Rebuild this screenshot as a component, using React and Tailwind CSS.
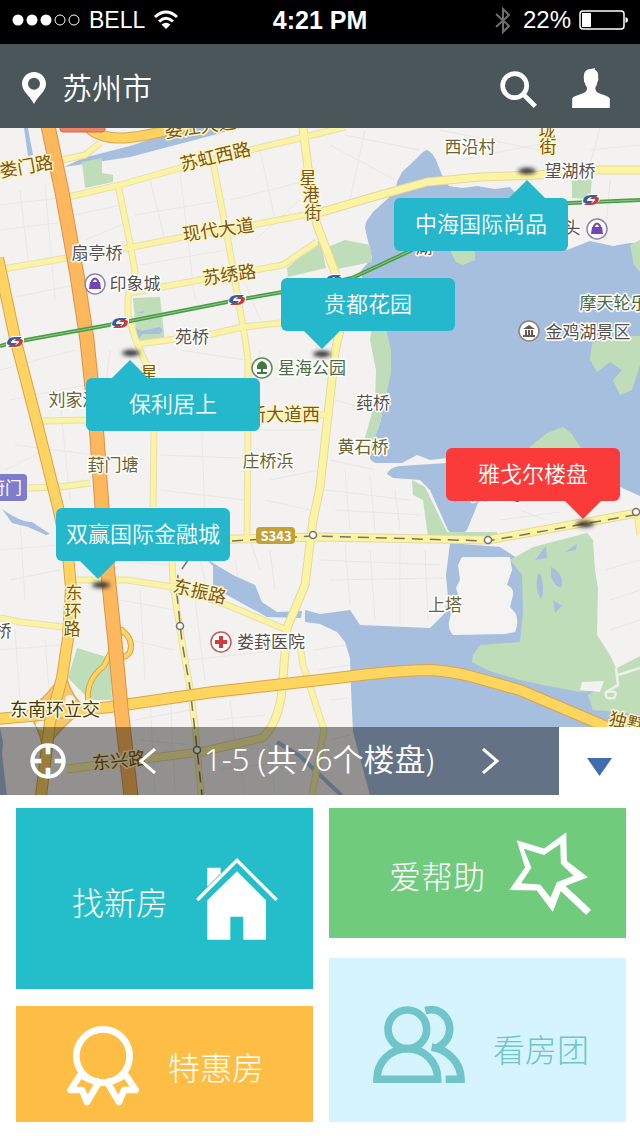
import React, { useState } from "react";

const MAP_WIDTH = 640;
const MAP_HEIGHT = 667;

// x / y are the top left corner of the bubble on the map, tail is the offset of its tip
const estates = [
  { name: "中海国际尚品", x: 394, y: 70, tail: 133, up: true },
  { name: "贵都花园", x: 281, y: 150, tail: 41, up: false },
  { name: "保利居上", x: 86, y: 250, tail: 44, up: true },
  { name: "雅戈尔楼盘", x: 446, y: 320, tail: 137, up: false, active: true },
  { name: "双赢国际金融城", x: 56, y: 380, tail: 42, up: false },
];

const lightRoads = [
  "M68 197L120 185L180 168L250 150L300 138L345 127",
  "M118 185L131 248L135 272L128 298L128 315L135 338L143 357L153 377L154 433L153 507",
  "M213 162L227 235L238 298L245 338L248 360L248 430L247 540",
  "M120 249L133 247L183 237L253 225L320 212",
  "M3 269L67 258",
  "M130 293L200 280L283 265L317 242",
  "M138 344L207 335L243 327L300 321",
  "M43 421L88 420",
  "M28 488L60 487L90 483",
  "M77 580L127 580L173 587L227 605L287 630",
  "M0 618L20 622L63 627",
  "M230 415L326 415",
  "M62 160L85 155L100 143",
  "M300 645L303 665L317 708L324 730L312 795",
  "M172 555L173 585L182 642L190 688L195 725L201 795",
  "M637 512L640 535",
];

const wideRoads = [
  "M303 128L308 168L317 225L335 272L341 325L335 352L320 487L313 520L308 560L305 585L287 628L282 690C280 712 272 730 262 738L200 752L67 769",
  "M315 214L373 197L427 182L480 177L540 175L567 170L640 170",
  "M200 540L320 537L488 540L637 513",
];

const faintStreets =
  "M0 205L60 198M0 230L65 222M0 300L75 285M20 190L28 260M45 185L55 300M75 215L120 205M85 240L128 222M150 180L165 240M180 172L195 300M135 215L225 200M230 200L310 180M260 150L275 220M240 270L260 320M140 265L225 250M255 240L300 200M330 145L395 180M345 135L420 150M365 130L350 200M440 130L540 150M460 160L560 140M600 128L590 165M610 180L605 240M640 145L590 150M0 370L75 350M10 400L85 385M15 445L95 455M5 470L45 450M60 400L70 500M110 350L100 430M160 455L240 458M200 380L205 520M180 350L245 360M260 350L255 400M160 490L245 500M270 480L320 470M255 430L315 430M265 500L310 510M335 400L370 410M330 460L375 470M325 490L410 500M345 470L350 530M370 475L375 530M395 490L400 530M335 510L420 515M0 550L60 545M10 580L60 570M20 520L25 600M0 650L60 645M15 630L20 700M45 640L50 700M110 560L170 565M120 600L175 610M130 640L175 650M140 590L145 680M195 600L205 680M190 660L280 650M200 560L210 600M235 560L240 590M250 540L260 570M270 550L275 590M320 560L440 565M330 580L445 578M345 545L350 605M370 550L375 620M400 545L400 625M425 550L428 620M315 650L345 645M318 670L348 665M135 720L190 710M140 740L190 745M150 700L155 790M170 690L175 790M210 700L275 690M215 720L265 715M230 700L235 745M220 770L300 760M240 755L245 795M270 745L275 795M330 700L348 698M330 740L350 735M520 510L545 520M500 520L560 512M605 570L640 560M610 600L640 590M610 630L640 620";

const metroLine =
  "M0 346L15 342L120 323L237 300L300 289L352 278L410 251L480 212L570 203L640 200";

const loopRamp = "M88 700Q86 680 104 666L122 630Q134 640 130 652Q124 662 112 650";

const labels = [
  { text: "娄门路", x: 26, y: 165, rotate: -10, size: 18, tone: "road" },
  { text: "娄江大道", x: 200, y: 125, rotate: -8, size: 18, tone: "road" },
  { text: "苏虹西路", x: 215, y: 155, rotate: -13, size: 18, tone: "road" },
  { text: "星", x: 308, y: 176, size: 17, tone: "road" },
  { text: "港", x: 311, y: 193, size: 17, tone: "road" },
  { text: "街", x: 313, y: 211, size: 17, tone: "road" },
  { text: "现代大道", x: 218, y: 228, rotate: -8, size: 18, tone: "road" },
  { text: "苏绣路", x: 229, y: 273, rotate: -8, size: 18, tone: "road" },
  { text: "扇亭桥", x: 97, y: 251, size: 17, tone: "place" },
  { text: "印象城", x: 135, y: 282, size: 17, tone: "place" },
  { text: "苑桥", x: 192, y: 335, size: 17, tone: "place" },
  { text: "西沿村", x: 470, y: 145, size: 17, tone: "village" },
  { text: "垅", x: 547, y: 129, size: 17, tone: "road" },
  { text: "街", x: 548, y: 145, size: 17, tone: "road" },
  { text: "望湖桥", x: 570, y: 169, size: 17, tone: "place" },
  { text: "头", x: 572, y: 226, size: 17, tone: "place" },
  { text: "湖", x: 424, y: 245, size: 17, tone: "place" },
  { text: "摩天轮乐园", x: 622, y: 301, size: 17, tone: "park" },
  { text: "金鸡湖景区", x: 588, y: 330, size: 17, tone: "place" },
  { text: "星", x: 149, y: 371, size: 17, tone: "road" },
  { text: "刘家浜", x: 74, y: 398, size: 17, tone: "village" },
  { text: "星海公园", x: 312, y: 366, size: 17, tone: "park" },
  { text: "新大道西", x: 284, y: 413, size: 18, tone: "road" },
  { text: "莼桥", x: 373, y: 401, size: 17, tone: "place" },
  { text: "黄石桥", x: 363, y: 445, size: 17, tone: "village" },
  { text: "庄桥浜", x: 268, y: 459, size: 17, tone: "village" },
  { text: "葑门塘", x: 113, y: 463, size: 17, tone: "village" },
  { text: "黄墅岛", x: 496, y: 492, size: 17, tone: "village" },
  { text: "东振路", x: 200, y: 590, rotate: 13, size: 18, tone: "road" },
  { text: "东", x: 74, y: 591, size: 17, tone: "road" },
  { text: "环", x: 73, y: 609, size: 17, tone: "road" },
  { text: "路", x: 72, y: 627, size: 17, tone: "road" },
  { text: "桥", x: 3, y: 629, size: 17, tone: "place" },
  { text: "娄葑医院", x: 271, y: 640, size: 17, tone: "place" },
  { text: "上塔", x: 445, y: 603, size: 17, tone: "village" },
  { text: "东南环立交", x: 55, y: 708, size: 18, tone: "junction" },
  { text: "东兴路", x: 119, y: 759, rotate: -6, size: 18, tone: "road" },
  { text: "独墅湖", x: 636, y: 723, rotate: 14, size: 18, tone: "road" },
];

const labelTones = {
  road: "fill-[#80560f] stroke-[#fff6c8]",
  place: "fill-[#56504c] stroke-white",
  village: "fill-[#6b6430] stroke-white",
  park: "fill-[#4b6b42] stroke-white",
  junction: "fill-[#4d3512] stroke-[#fffbe6]",
};

const MetroIcon = ({ x, y }) => (
  <g transform={`translate(${x} ${y})`}>
    <path d="M-9 1L-3 -6H9V0L3 6H-9Z" fill="#ffffff" />
    <path d="M-8 2Q-8 -5 0 -5H7L5 -3H0Q-4 -2 -4 1H2L0 3H-6Z" fill="#3a5c9c" />
    <path d="M8 -2Q8 5 0 5H-7L-5 3H0Q4 2 4 -1H-1L1 -3H6Z" fill="#c93a3a" />
  </g>
);

const ShopIcon = ({ x, y }) => (
  <g transform={`translate(${x} ${y})`}>
    <circle r="10" fill="#fff" stroke="#8d86a8" strokeWidth="1.5" />
    <path d="M-5 -2H5L6 5H-6Z" fill="#7346b8" />
    <path d="M-3 -1V-3Q0 -8 3 -3V-1" fill="none" stroke="#7346b8" strokeWidth="2" />
  </g>
);

const CityMap = () => (
  <svg
    viewBox="0 128 640 667"
    className="block w-full h-auto font-['Noto_Sans_CJK_SC',sans-serif]"
    role="img"
    aria-label="苏州市地图"
  >
    <defs>
      <filter id="soft" x="-50%" y="-100%" width="200%" height="300%">
        <feGaussianBlur stdDeviation="2" />
      </filter>
    </defs>
    <rect y="128" width="640" height="667" fill="#f3f2f0" />
    <path d={faintStreets} fill="none" stroke="#e9e7e4" strokeWidth="1" />

    {/* water */}
    <g fill="#a7bfdf">
      <path d="M427 150Q432 152 436 160L442 175L449 186L462 188L477 186L495 189L510 187L520 198L567 250L590 241L613 246L630 243H640V496L620 487L600 470L447 458L430 460L417 455L402 463L376 463Q368 462 370 450L380 423L386 395L390 373L388 340L380 325L360 272L372 258L365 228L366 222L373 212L395 192L397 182L402 172L417 158Q424 150 427 150Z" />
      <path d="M387 474Q390 467 400 466L447 463L500 470L478 503L467 530L457 538L448 530L430 490L420 480L393 478Z" />
      <path d="M305 610L320 614L350 610L360 625L430 628L443 615L448 598L446 575L450 543L500 547L520 560L540 600L540 650L600 690L640 710V795H370L353 732L351 688L350 658L345 642L337 632L320 624L305 622Z" />
      <path d="M202 555L213 563L233 575L255 585L262 602L277 612L302 611L301 618L267 617L227 595L213 587L213 566Z" />
      <path d="M83 158L130 146L185 128H240L130 157L64 167Z" />
      <path d="M24 128H28L33 155L28 156Z" />
      <path d="M2 509Q20 522 32 522L50 534L46 535L28 527L12 523Z" />
      <path d="M0 728L3 742L2 755L7 795H0Z" />
    </g>
    <path d="M277 742L300 756L342 796" fill="none" stroke="#a7bfdf" strokeWidth="4" />
    <path
      d="M462 557H510L512 570L507 585Q514 588 513 595L510 607L516 614Q519 624 515 632L505 634L453 635Q448 630 449 622L453 605L459 597L456 588L460 580L458 565Z"
      fill="#f4f3f1"
    />

    {/* parks */}
    <g fill="#c0ddb9">
      <path d="M82 162L102 158V173L113 175V182L85 188Z" />
      <path d="M133 298L160 297L165 342L137 343Z" />
      <path d="M287 268L320 240L326 268L288 277Z" />
      <path d="M328 247L345 240L370 245L372 262L332 270Z" />
      <path d="M372 325H385L391 350V373L380 423L373 443L364 441L375 403L376 370L370 340Z" />
      <path d="M450 250H475V260L463 265L456 262Z" />
      <path d="M572 180L592 179L590 199L572 198Z" />
      <path d="M630 245L640 240V272L634 265Z" />
      <path d="M592 343L618 336H640V365L632 390L620 395L613 380L622 370L610 362L597 372L590 360Z" />
      <path d="M526 450L547 433L563 427L572 434L582 450Z" />
      <path d="M412 480L425 487L447 532H497V537H428L423 500L413 495Z" />
      <path d="M510 560L533 547L587 533L593 540L595 570L598 588L597 635L610 655L616 668L610 688L580 692L553 687L520 680L487 670L472 662L473 655L480 645L520 642L523 612L522 575Z" />
      <path d="M617 668L640 656V715L620 712L593 710L588 695L605 686Z" />
      <path d="M77 648L110 658L112 700H90L68 678Z" />
    </g>
    <g fill="#a7bfdf">
      <path d="M535 560L546 546L547 558Z" />
      <path d="M565 552L577 544L576 550Z" />
      <path d="M538 573Q534 590 541 599Q545 590 541 575Z" />
      <path d="M551 567Q563 572 562 586Q556 590 551 576Z" />
      <path d="M553 600L562 606L555 613Z" />
      <path d="M136 328L141 331L160 327L163 330L160 334L143 334L138 339Z" />
      <path d="M136 313L144 311L143 313Z" />
    </g>
    <path
      d="M616 668L618 685L606 692M618 675L640 668M606 692Q604 700 614 698Q620 690 606 692"
      fill="none"
      stroke="#f0efec"
      strokeWidth="2.5"
    />
    <path d="M582 682L604 681L600 692L580 690Z" fill="#f3f2f0" />

    {/* roads */}
    {lightRoads.map((d) => (
      <path key={d} d={d} fill="none" stroke="#e6dfae" strokeWidth="7" strokeLinejoin="round" />
    ))}
    {wideRoads.map((d) => (
      <path key={d} d={d} fill="none" stroke="#e3d99c" strokeWidth="9" strokeLinejoin="round" />
    ))}
    {lightRoads.map((d) => (
      <path key={d} d={d} fill="none" stroke="#fcf3a4" strokeWidth="5" strokeLinejoin="round" />
    ))}
    {wideRoads.map((d) => (
      <path key={d} d={d} fill="none" stroke="#fdf4a3" strokeWidth="7" strokeLinejoin="round" />
    ))}

    {/* railway */}
    <path
      d="M188 560L178 575L177 595L182 642L190 688L196 740L202 795M232 541L313 536L488 541L640 514"
      fill="none"
      stroke="#77716a"
      strokeWidth="1.5"
      strokeDasharray="11 7"
    />
    <g fill="#fff" stroke="#77716a" strokeWidth="1.5">
      <circle cx="313" cy="535" r="3.5" />
      <circle cx="488" cy="540" r="3.5" />
      <circle cx="636" cy="512" r="3.5" />
      <circle cx="180" cy="626" r="3.5" />
      <circle cx="197" cy="750" r="3.5" />
    </g>

    {/* express ways */}
    <g fill="none" strokeLinejoin="round">
      <path
        d="M60 676Q50 694 26 712Q38 724 42 744H50Q60 728 86 708Q72 698 66 676Z"
        fill="#f6c66a"
        stroke="#e0ad58"
        strokeWidth="1.5"
      />
      <circle cx="41" cy="725" r="5" fill="#f3f2f0" />
      <circle cx="70" cy="700" r="5" fill="#f3f2f0" />
      <path d={loopRamp} stroke="#d7a446" strokeWidth="6" />
      <path d={loopRamp} stroke="#fcd562" strokeWidth="4" />
      <path
        d="M-2 719L30 716L110 707L213 692L320 680L370 674Q410 670 430 670Q450 671 470 676L520 690L607 727L642 744"
        stroke="#d9a548"
        strokeWidth="12"
      />
      <path
        d="M-2 719L30 716L110 707L213 692L320 680L370 674Q410 670 430 670Q450 671 470 676L520 690L607 727L642 744"
        stroke="#fed65f"
        strokeWidth="10"
      />
      <path d="M88 127Q100 139 125 138Q150 136 192 124" stroke="#dca947" strokeWidth="11" />
      <path d="M88 127Q100 139 125 138Q150 136 192 124" stroke="#fdd262" strokeWidth="9" />
      <path
        d="M-2 258L15 338L37 423L58 507L68 555L71 588L68 638L62 678L50 722L41 796"
        stroke="#d9a548"
        strokeWidth="12"
      />
      <path
        d="M-2 258L15 338L37 423L58 507L68 555L71 588L68 638L62 678L50 722L41 796"
        stroke="#fed362"
        strokeWidth="10"
      />
      <path
        d="M48 126L62 192L77 275L87 340L97 437L102 507L108 575L115 642L121 708L131 796"
        stroke="#d9934a"
        strokeWidth="15"
      />
      <path
        d="M48 126L62 192L77 275L87 340L97 437L102 507L108 575L115 642L121 708L131 796"
        stroke="#fdb75d"
        strokeWidth="13"
      />
    </g>
    <rect x="60" y="120" width="45" height="12" rx="3" fill="#ea8465" stroke="#cf6a4e" />

    {/* metro line */}
    <g fill="none">
      <path d={metroLine} stroke="#4b9d45" strokeWidth="4" />
      <path d={metroLine} stroke="#8cc985" strokeWidth="1" />
    </g>
    <MetroIcon x={15} y={342} />
    <MetroIcon x={120} y={323} />
    <MetroIcon x={237} y={300} />
    <MetroIcon x={334} y={280} />
    <MetroIcon x={591} y={200} />

    {/* points of interest */}
    <ShopIcon x={95} y={284} />
    <ShopIcon x={597} y={229} />
    <g transform="translate(529 331)">
      <circle r="10" fill="#fff" stroke="#8d837c" strokeWidth="1.5" />
      <path d="M-6 -2L0 -6L6 -2ZM-6 4H6V6H-6ZM-4 -1H-2V4H-4ZM-1 -1H1V4H-1ZM2 -1H4V4H2Z" fill="#6b5a50" />
    </g>
    <g transform="translate(262 368)">
      <circle r="10" fill="#fff" stroke="#5d8a5a" strokeWidth="1.5" />
      <path d="M0 -7Q6 -5 5 1H1V4H5V6H-5V4H-1V1H-5Q-6 -5 0 -7Z" fill="#3f7a3f" />
    </g>
    <g transform="translate(221 642)">
      <circle r="10" fill="#fff" stroke="#c65a5a" strokeWidth="1.5" />
      <path d="M-2 -6H2V-2H6V2H2V6H-2V2H-6V-2H-2Z" fill="#d23c3c" />
    </g>

    {labels.map((label) => (
      <text
        key={`${label.text}-${label.x}`}
        transform={`translate(${label.x} ${label.y}) rotate(${label.rotate || 0})`}
        textAnchor="middle"
        dominantBaseline="central"
        fontSize={label.size}
        strokeWidth="3"
        strokeLinejoin="round"
        paintOrder="stroke"
        className={labelTones[label.tone]}
      >
        {label.text}
      </text>
    ))}

    <rect x="-10" y="474" width="37" height="27" rx="4" fill="#7e7ccb" />
    <text x="5" y="486" textAnchor="middle" dominantBaseline="central" fontSize="17" fill="#fff">
      葑门
    </text>
    <rect x="256" y="527" width="39" height="17" rx="4" fill="#c4a038" />
    <text
      x="276"
      y="535"
      textAnchor="middle"
      dominantBaseline="central"
      fontSize="13"
      fontWeight="700"
      fill="#fff"
    >
      S343
    </text>

    {/* shadows under the bubble tips */}
    <g fill="#2c2c2c" filter="url(#soft)">
      <ellipse cx="527" cy="171" rx="9" ry="3" />
      <ellipse cx="322" cy="354" rx="9" ry="3" />
      <ellipse cx="131" cy="353" rx="9" ry="3" />
      <ellipse cx="585" cy="524" rx="9" ry="3" />
      <ellipse cx="101" cy="585" rx="9" ry="3" />
    </g>
  </svg>
);

const EstateBubble = ({ estate }) => {
  const color = estate.active ? "bg-[#fb3a3a]" : "bg-[#25b8cc]";
  const tail = estate.active ? "fill-[#fb3a3a]" : "fill-[#25b8cc]";

  return (
    <button
      type="button"
      className={`absolute flex h-[53px] w-[174px] items-center justify-center rounded-md pb-1 text-[22px] font-[350] whitespace-nowrap text-white ${color}`}
      style={{
        left: `${(estate.x / MAP_WIDTH) * 100}%`,
        top: `${(estate.y / MAP_HEIGHT) * 100}%`,
      }}
    >
      {estate.name}
      <svg
        viewBox="0 0 36 18"
        className={`absolute h-[18px] w-9 -translate-x-1/2 ${tail} ${
          estate.up ? "bottom-full" : "top-full"
        }`}
        style={{ left: estate.tail }}
        aria-hidden="true"
      >
        <path d={estate.up ? "M0 18L18 0L36 18Z" : "M0 0H36L18 18Z"} />
      </svg>
    </button>
  );
};

const StatusBar = () => (
  <div className="grid h-11 grid-cols-3 items-center bg-black px-3 pb-1 font-['Liberation_Sans',sans-serif] text-white">
    <div className="flex items-center gap-2">
      <svg width="69" height="12" viewBox="0 0 69 12" aria-hidden="true">
        <g fill="#fff">
          <circle cx="6" cy="6" r="5.5" />
          <circle cx="20" cy="6" r="5.5" />
          <circle cx="34" cy="6" r="5.5" />
        </g>
        <g fill="none" stroke="#fff">
          <circle cx="48" cy="6" r="5" />
          <circle cx="62" cy="6" r="5" />
        </g>
      </svg>
      <span className="text-[23px] leading-none">BELL</span>
      <svg width="26" height="20" viewBox="0 0 26 20" fill="none" stroke="#fff" strokeWidth="3" aria-hidden="true">
        <path d="M2 7Q13 -3 24 7" />
        <path d="M6 11.5Q13 5 20 11.5" />
        <path d="M13 19L8.500 14.500Q13 11 17.500 14.500Z" fill="#fff" stroke="none" />
      </svg>
    </div>
    <div className="text-center text-[25px] leading-none font-bold">4:21 PM</div>
    <div className="flex items-center justify-end gap-2">
      <svg width="16" height="27" viewBox="0 0 16 27" fill="none" stroke="#6e6e6e" strokeWidth="2" aria-hidden="true">
        <path d="M1 7L14 19L8 25V2L14 8L1 20" />
      </svg>
      <span className="ml-1 text-2xl leading-none">22%</span>
      <svg width="49" height="20" viewBox="0 0 49 20" aria-hidden="true">
        <rect x="1" y="1" width="44" height="18" rx="3" fill="none" stroke="#fff" strokeWidth="1.5" />
        <rect x="3" y="3" width="9" height="14" fill="#fff" />
        <path d="M46.500 7Q49 7.500 49 10Q49 12.500 46.500 13Z" fill="#fff" />
      </svg>
    </div>
  </div>
);

const Header = () => (
  <header className="flex h-[84px] items-center justify-between bg-[#4a565a] pr-[30px] pl-[22px] text-white">
    <button type="button" className="flex items-center gap-4">
      <svg width="24" height="32" viewBox="0 0 72 96" fill="currentColor" className="mt-1" aria-hidden="true">
        <path
          fillRule="evenodd"
          d="M36 0C56 0 72 15 72 36C72 58 48 72 36 96C24 72 0 58 0 36C0 15 16 0 36 0ZM36 17A18 18 0 1 0 36 53A18 18 0 1 0 36 17Z"
        />
      </svg>
      <span className="text-[30px] leading-none font-[350]">苏州市</span>
    </button>
    <div className="flex items-center gap-[34px]">
      <button type="button" aria-label="搜索" className="pt-2">
        <svg width="38" height="38" viewBox="0 0 114 114" fill="none" stroke="currentColor" aria-hidden="true">
          <circle cx="44" cy="44" r="36" strokeWidth="14" />
          <path d="M70 70L106 106" strokeWidth="14" />
        </svg>
      </button>
      <button type="button" aria-label="我的" className="pt-1">
        <svg width="38" height="40" viewBox="0 0 112 119" fill="currentColor" aria-hidden="true">
          <path d="M0 119V90Q5 84 14 82L32 75Q43 71 44 64V58Q38 52 38 44Q34 42 35 34Q33 16 40 9Q46 2 56 3L68 0L67 5Q80 12 77 28Q80 34 75 42Q74 52 69 58V64Q70 71 80 75L98 82Q108 85 112 90V119Z" />
        </svg>
      </button>
    </div>
  </header>
);

const MapToolbar = () => {
  const [page, setPage] = useState(0);

  return (
    <div className="absolute inset-x-0 bottom-0 flex h-[68px]">
      <div className="flex flex-1 items-center bg-black/40 pl-[30px] text-white">
        <button type="button" aria-label="定位">
          <svg width="36" height="36" viewBox="0 0 108 108" fill="none" stroke="currentColor" aria-hidden="true">
            <circle cx="54" cy="54" r="47" strokeWidth="12" />
            <path d="M54 6V34M54 74V102M6 54H34M74 54H102" strokeWidth="14" />
          </svg>
        </button>
        <div className="ml-[72px] flex items-center gap-12">
          <button type="button" aria-label="上一页" onClick={() => setPage(Math.max(page - 1, 0))}>
            <svg width="18" height="26" viewBox="0 0 18 26" fill="none" stroke="currentColor" strokeWidth="3" aria-hidden="true">
              <path d="M17 1L3 13L17 25" />
            </svg>
          </button>
          <span className="pb-1 font-['Noto_Sans','Noto_Sans_CJK_SC',sans-serif] text-[31px] leading-none font-[350] whitespace-nowrap">
            {page * 5 + 1}-{page * 5 + 5} (共76个楼盘)
          </span>
          <button type="button" aria-label="下一页" onClick={() => setPage(Math.min(page + 1, 14))}>
            <svg width="18" height="26" viewBox="0 0 18 26" fill="none" stroke="currentColor" strokeWidth="3" aria-hidden="true">
              <path d="M1 1L15 13L1 25" />
            </svg>
          </button>
        </div>
      </div>
      <button
        type="button"
        aria-label="收起地图"
        className="flex w-[81px] items-center justify-center bg-white pt-3"
      >
        <svg width="25" height="18" viewBox="0 0 25 18" fill="#416daf" aria-hidden="true">
          <path d="M0 0H25L12.500 18Z" />
        </svg>
      </button>
    </div>
  );
};

const HouseIcon = () => (
  <svg width="82" height="82" viewBox="0 0 246 246" aria-hidden="true">
    <path d="M4 126L123 7L242 126" fill="none" stroke="currentColor" strokeWidth="10" />
    <path d="M34 29H74V46L34 86Z" fill="currentColor" />
    <path d="M123 40L210 127V245H142V176H103V245H34V127Z" fill="currentColor" />
  </svg>
);

const RibbonIcon = () => (
  <svg
    width="74"
    height="80"
    viewBox="-1 0 222 240"
    fill="none"
    stroke="currentColor"
    strokeWidth="20"
    strokeLinejoin="round"
    aria-hidden="true"
  >
    <circle cx="110" cy="90" r="80" />
    <path d="M44 144L12 192H47L62 228L98 168M44 144Q66 166 98 166" />
    <path d="M176 144L208 192H173L158 228L122 168M176 144Q154 166 122 166" />
  </svg>
);

const WandIcon = () => (
  <svg width="83" height="83" viewBox="0 0 248 248" fill="currentColor" aria-hidden="true">
    <path
      fillRule="evenodd"
      d="M23 25L105 49L171 1L173 87L236 135L159 165L131 239L83 175L1 173L48 106ZM44 50L67 107L36 153L93 157L124 196L143 150L193 131L155 95L153 36L105 69Z"
    />
    <path d="M152 160L238 240" fill="none" stroke="currentColor" strokeWidth="21" />
  </svg>
);

const PeopleIcon = () => (
  <svg width="92" height="77" viewBox="0 0 276 231" fill="none" stroke="currentColor" strokeWidth="23" aria-hidden="true">
    <circle cx="103" cy="70" r="58" />
    <path d="M12 220C12 168 52 128 103 128C154 128 194 168 194 220Z" />
    <path d="M157 14C200 2 230 34 230 70C230 98 212 115 192 126L176 124C228 132 264 172 264 220H218" />
  </svg>
);

const Home = () => (
  <nav className="grid grid-cols-2 gap-4 bg-white pt-[13px] pr-[14px] pb-[14px] pl-4 text-[32px] leading-none font-light text-white">
    <div className="flex flex-col gap-[17px]">
      <a href="#new" className="flex h-[181px] items-center gap-7 bg-[#24becb] pl-14">
        <span className="pt-1">找新房</span>
        <HouseIcon />
      </a>
      <a href="#discount" className="flex h-[116px] items-center gap-7 bg-[#febe45] pt-1 pl-[50px]">
        <RibbonIcon />
        <span>特惠房</span>
      </a>
    </div>
    <div className="flex flex-col gap-5">
      <a href="#help" className="flex h-[130px] items-center gap-6 bg-[#70cb7c] pl-15">
        <span className="pt-1">爱帮助</span>
        <WandIcon />
      </a>
      <a href="#group" className="flex h-[164px] items-center gap-7 bg-[#d6f4fe] pt-2 pl-11 text-[#6fc5c9]">
        <PeopleIcon />
        <span className="pt-2">看房团</span>
      </a>
    </div>
  </nav>
);

const App = () => {
  return (
    <div className="bg-white font-['Noto_Sans_CJK_SC',sans-serif]">
      <StatusBar />
      <Header />
      <main>
        <section className="relative overflow-hidden">
          <CityMap />
          {estates.map((estate) => (
            <EstateBubble key={estate.name} estate={estate} />
          ))}
          <MapToolbar />
        </section>
        <Home />
      </main>
    </div>
  );
};

export default App;
